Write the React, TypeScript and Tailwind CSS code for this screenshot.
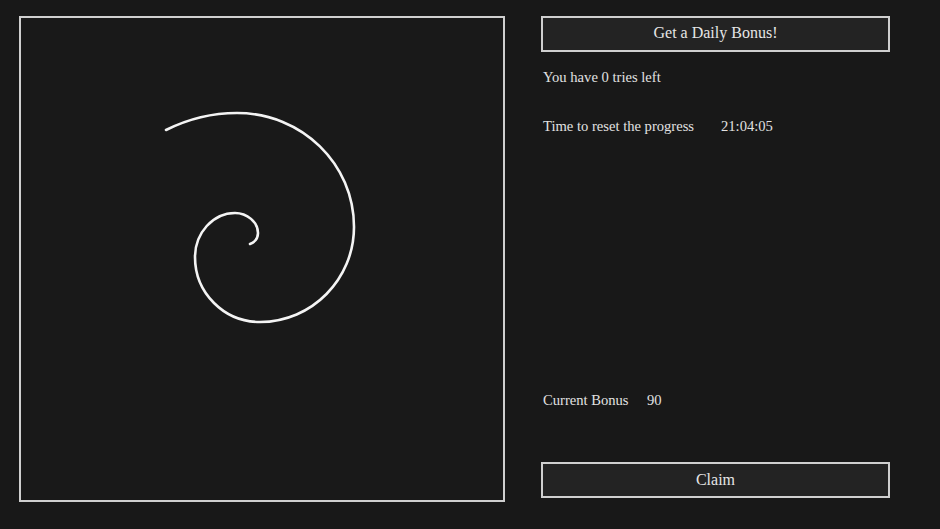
export default function App() {
  return (
    <div
      className="flex h-[529px] w-full bg-[#181818] pl-[19px] pt-[16px] text-[14.6px] text-[#e2e2e2]"
      style={{ fontFamily: '"Liberation Serif", "DejaVu Serif", serif' }}
    >
      {/* spiral canvas */}
      <div className="h-[486px] w-[486px] shrink-0 border-2 border-[#cfcfcf] bg-[#191919]">
        <svg className="h-full w-full" viewBox="21 18 482 482" fill="none">
          <path
            d="M250 244 C255 242 258 238 258 233 C258 222 247 213 235 213 C213 213 195 233 195 257 C195 293 224 322 260 322 C312 322 354 279 354 227 C354 164 302 113 237 113 C212 113 188 119 166 130"
            stroke="#f4f4f4"
            strokeWidth="2.6"
            strokeLinecap="round"
          />
        </svg>
      </div>

      {/* bonus panel */}
      <div className="ml-[36px] flex h-[482px] w-[349px] shrink-0 flex-col">
        <button className="h-[36px] w-full border-2 border-[#cfcfcf] bg-[#232323] pb-[3px] text-[16px] text-[#e6e6e6]">
          Get a Daily Bonus!
        </button>
        <div className="mt-[15px] pl-[2px] leading-[20px]">You have 0 tries left</div>
        <div className="mt-[29px] flex pl-[2px] leading-[20px]">
          <span className="w-[178px]">Time to reset the progress</span>
          <span>21:04:05</span>
        </div>
        <div className="mt-auto flex pl-[2px] leading-[20px]">
          <span className="w-[104px]">Current Bonus</span>
          <span>90</span>
        </div>
        <button className="mt-[52px] h-[36px] w-full border-2 border-[#cfcfcf] bg-[#232323] pb-[1px] text-[16px] text-[#e6e6e6]">
          Claim
        </button>
      </div>
    </div>
  );
}
